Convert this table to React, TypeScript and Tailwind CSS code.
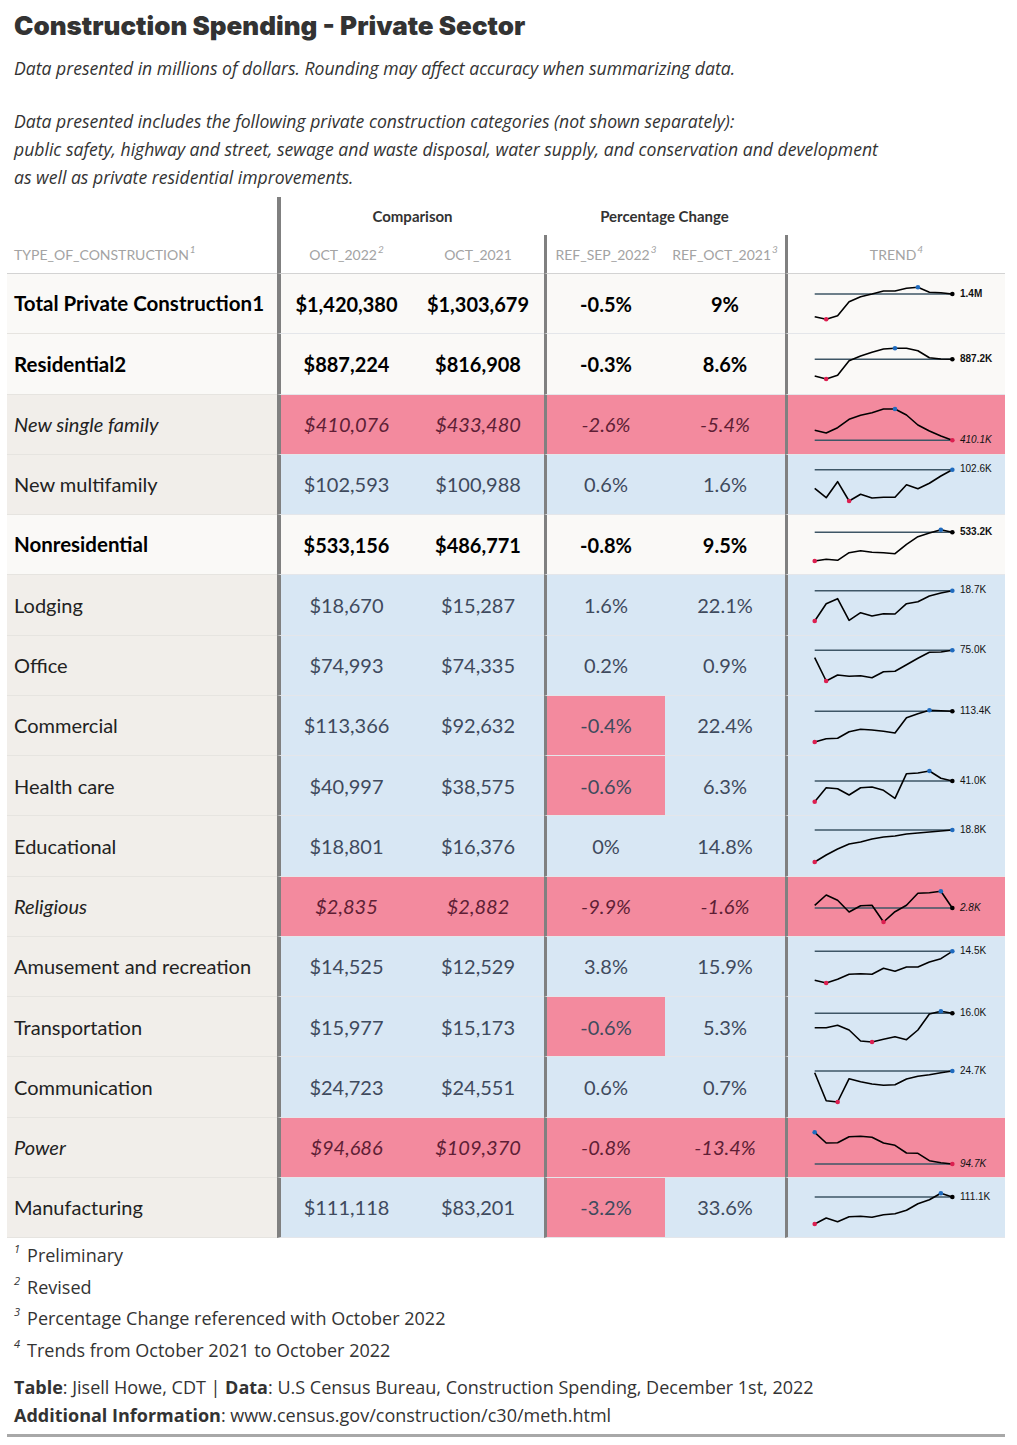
import React from "react";

type Row = {
  name: string;
  kind: "bold" | "red" | "plain";
  v1: string;
  v2: string;
  p1: string;
  p2: string;
  p1Red?: boolean;
  label: string;
  pts: number[];
  lo: number;
  hi: number;
};

const rows: Row[] = [
  { name: "Total Private Construction1", kind: "bold", v1: "$1,420,380", v2: "$1,303,679", p1: "-0.5%", p2: "9%", label: "1.4M", pts: [42.7, 45.3, 41.7, 27.7, 22.7, 20, 17, 17, 14.3, 13.3, 18.3, 18.7, 20], lo: 1, hi: 9 },
  { name: "Residential2", kind: "bold", v1: "$887,224", v2: "$816,908", p1: "-0.3%", p2: "8.6%", label: "887.2K", pts: [42, 45, 41.3, 26.7, 22, 18.3, 15, 14.3, 14.3, 16.7, 23.7, 25, 25.3], lo: 1, hi: 7 },
  { name: "New single family", kind: "red", v1: "$410,076", v2: "$433,480", p1: "-2.6%", p2: "-5.4%", label: "410.1K", pts: [35.3, 38, 32.7, 24.3, 20.3, 17.7, 14, 14, 20, 30, 36, 41, 45.3], lo: 12, hi: 7 },
  { name: "New multifamily", kind: "plain", v1: "$102,593", v2: "$100,988", p1: "0.6%", p2: "1.6%", label: "102.6K", pts: [33.3, 42.7, 26.7, 46, 39.3, 43, 42.3, 42.3, 29.7, 33.7, 28.3, 21, 14.7], lo: 3, hi: 12 },
  { name: "Nonresidential", kind: "bold", v1: "$533,156", v2: "$486,771", p1: "-0.8%", p2: "9.5%", label: "533.2K", pts: [46, 44.3, 45.3, 37.7, 35.7, 37.3, 37.7, 38.7, 29.3, 21.7, 18, 14.7, 17.3], lo: 0, hi: 11 },
  { name: "Lodging", kind: "plain", v1: "$18,670", v2: "$15,287", p1: "1.6%", p2: "22.1%", label: "18.7K", pts: [46, 28.7, 23.7, 45.3, 37.7, 41, 38.7, 39, 28.7, 26.7, 21, 18, 15.7], lo: 0, hi: 12 },
  { name: "Office", kind: "plain", v1: "$74,993", v2: "$74,335", p1: "0.2%", p2: "0.9%", label: "75.0K", pts: [21.7, 45, 39, 40.3, 39.7, 41.7, 35.7, 35.3, 28.7, 22.3, 16.3, 16, 14.3], lo: 1, hi: 12 },
  { name: "Commercial", kind: "plain", v1: "$113,366", v2: "$92,632", p1: "-0.4%", p2: "22.4%", p1Red: true, label: "113.4K", pts: [46, 42.7, 42.3, 35.7, 33.3, 34, 35.3, 37, 21.7, 17.7, 14.3, 14.7, 15.3], lo: 0, hi: 10 },
  { name: "Health care", kind: "plain", v1: "$40,997", v2: "$38,575", p1: "-0.6%", p2: "6.3%", p1Red: true, label: "41.0K", pts: [45.7, 31.7, 32.7, 39, 31.7, 31, 34.3, 42.3, 17.7, 17, 15, 22.3, 25], lo: 0, hi: 10 },
  { name: "Educational", kind: "plain", v1: "$18,801", v2: "$16,376", p1: "0%", p2: "14.8%", label: "18.8K", pts: [46, 39, 33, 28, 26, 23, 21, 20, 18, 17, 16, 15, 14], lo: 0, hi: 12 },
  { name: "Religious", kind: "red", v1: "$2,835", v2: "$2,882", p1: "-9.9%", p2: "-1.6%", label: "2.8K", pts: [28.3, 18, 23.3, 35, 28.7, 28.3, 45, 34.7, 28.3, 16.3, 15.7, 14.3, 31], lo: 6, hi: 11 },
  { name: "Amusement and recreation", kind: "plain", v1: "$14,525", v2: "$12,529", p1: "3.8%", p2: "15.9%", label: "14.5K", pts: [43.3, 46, 42.3, 37.3, 36.7, 37.3, 31.3, 34.3, 30, 30, 25, 21.7, 14.3], lo: 1, hi: 12 },
  { name: "Transportation", kind: "plain", v1: "$15,977", v2: "$15,173", p1: "-0.6%", p2: "5.3%", p1Red: true, label: "16.0K", pts: [30.7, 30.7, 28.3, 33, 44, 45, 42.3, 39.7, 42.7, 33, 17, 14.3, 16.3], lo: 5, hi: 11 },
  { name: "Communication", kind: "plain", v1: "$24,723", v2: "$24,551", p1: "0.6%", p2: "0.7%", label: "24.7K", pts: [15.7, 43.7, 45, 21.7, 24.7, 27, 28.3, 27.7, 22, 19.3, 17.7, 15.7, 14], lo: 2, hi: 12 },
  { name: "Power", kind: "red", v1: "$94,686", v2: "$109,370", p1: "-0.8%", p2: "-13.4%", label: "94.7K", pts: [14.3, 25, 24.7, 18.7, 18.3, 19.3, 25, 27.3, 35, 35.3, 42.7, 44.7, 46], lo: 12, hi: 0 },
  { name: "Manufacturing", kind: "plain", v1: "$111,118", v2: "$83,201", p1: "-3.2%", p2: "33.6%", p1Red: true, label: "111.1K", pts: [46, 40, 43.7, 38.7, 38.3, 39.3, 36.7, 35.7, 32.3, 25.7, 21.7, 15.3, 19], lo: 0, hi: 11 },
];

function Sparkline({ row }: { row: Row }) {
  const x0 = 26.7;
  const step = 11.47;
  const pts = row.pts.map((y, i) => [x0 + i * step, y] as const);
  const last = pts[pts.length - 1];
  const d = pts.map(([x, y], i) => `${i === 0 ? "M" : "L"}${x.toFixed(1)},${y}`).join(" ");
  const lastIdx = pts.length - 1;
  const showLast = lastIdx !== row.lo && lastIdx !== row.hi;
  return (
    <svg width="217" height="60" viewBox="0 0 217 60" className="block">
      <line x1={x0} x2={last[0]} y1={last[1]} y2={last[1]} stroke="#3e5666" strokeWidth="1.4" />
      <path d={d} fill="none" stroke="#000" strokeWidth="1.6" strokeLinejoin="round" />
      <circle cx={pts[row.lo][0]} cy={pts[row.lo][1]} r="2.3" fill="#dc1f50" />
      <circle cx={pts[row.hi][0]} cy={pts[row.hi][1]} r="2.3" fill="#1f6bbf" />
      {showLast && <circle cx={last[0]} cy={last[1]} r="2.3" fill="#000" />}
      <text
        x="172"
        y={last[1]}
        dominantBaseline="middle"
        fontFamily="'Liberation Sans', Arial, sans-serif"
        fontSize="10"
        fontWeight={row.kind === "bold" ? 700 : 400}
        fontStyle={row.kind === "red" ? "italic" : "normal"}
        fill="#111"
      >
        {row.label}
      </text>
    </svg>
  );
}

function Sup({ n }: { n: number }) {
  return <sup className="ml-[1px] text-[10px] italic">{n}</sup>;
}

export default function App() {
  return (
    <div className="w-[1017px] bg-white pb-2" style={{ fontFamily: "Lato, 'Noto Sans', sans-serif" }}>
      <div className="pl-[14px] pt-[10px]">
        <h1 className="font-['Inter',sans-serif] text-[26px] font-black leading-[32px] text-[#333333]">
          Construction Spending - Private Sector
        </h1>
        <p className="mt-[12px] font-['Open_Sans',sans-serif] text-[17.6px] italic leading-[28px] text-[#333333]">
          Data presented in millions of dollars. Rounding may affect accuracy when summarizing data.
        </p>
        <p className="mt-[25px] font-['Open_Sans',sans-serif] text-[17.6px] italic leading-[28px] text-[#333333]">
          Data presented includes the following private construction categories (not shown separately):
          <br />
          public safety, highway and street, sewage and waste disposal, water supply, and conservation and development
          <br />
          as well as private residential improvements.
        </p>
      </div>

      <div className="ml-[7px] mt-[6px] w-[998px]">
        {/* spanner row */}
        <div className="flex h-[38px]">
          <div className="w-[270px]" />
          <div className="flex w-[267px] items-center justify-center border-l-[4px] border-[#808080] text-[15px] font-bold text-[#333333]">
            Comparison
          </div>
          <div className="flex w-[241px] items-center justify-center text-[15px] font-bold text-[#333333]">
            Percentage Change
          </div>
          <div className="w-[220px]" />
        </div>
        {/* column labels */}
        <div className="flex h-[39px] text-[14px] text-[#a3a3a3]">
          <div className="flex w-[270px] items-center border-b border-[#d3d3d3] pl-[7px]">
            TYPE_OF_CONSTRUCTION<Sup n={1} />
          </div>
          <div className="flex w-[135px] items-center justify-center border-b border-l-[4px] border-b-[#d3d3d3] border-l-[#808080]">
            OCT_2022<Sup n={2} />
          </div>
          <div className="flex w-[132px] items-center justify-center border-b border-[#d3d3d3]">OCT_2021</div>
          <div className="flex w-[121px] items-center justify-center border-b border-l-[3px] border-b-[#d3d3d3] border-l-[#808080]">
            REF_SEP_2022<Sup n={3} />
          </div>
          <div className="flex w-[120px] items-center justify-center border-b border-[#d3d3d3]">
            REF_OCT_2021<Sup n={3} />
          </div>
          <div className="flex w-[220px] items-center justify-center border-b border-l-[3px] border-b-[#d3d3d3] border-l-[#808080]">
            TREND<Sup n={4} />
          </div>
        </div>

        {rows.map((r) => {
          const bold = r.kind === "bold";
          const red = r.kind === "red";
          const firstBg = bold ? "bg-[#faf9f7]" : "bg-[#f1eeea]";
          const dataBg = bold ? "bg-[#faf9f7]" : red ? "bg-[#f38a9e]" : "bg-[#d8e7f4]";
          const dataText = bold
            ? "font-bold text-black"
            : red
            ? "italic text-[#5e1e35]"
            : "text-[#3f4a5d]";
          const firstText = bold ? "font-bold text-black text-[20.5px]" : red ? "italic text-[#222]" : "text-[#222]";
          const p1Bg = r.p1Red ? "bg-[#f38a9e]" : dataBg;
          return (
            <div key={r.name} className="flex h-[60.25px] text-[20px]">
              <div className={`flex w-[270px] items-center border-b border-[#e6e4e0] pl-[7px] ${firstBg} ${firstText}`}>
                {r.name}
              </div>
              <div className={`flex w-[135px] items-center justify-center border-b border-l-[4px] border-b-[#e4e6ea] border-l-[#808080] ${dataBg} ${dataText}`}>
                {r.v1}
              </div>
              <div className={`flex w-[132px] items-center justify-center border-b border-[#e4e6ea] ${dataBg} ${dataText}`}>
                {r.v2}
              </div>
              <div className={`flex w-[121px] items-center justify-center border-b border-l-[3px] border-b-[#e4e6ea] border-l-[#808080] ${p1Bg} ${dataText}`}>
                {r.p1}
              </div>
              <div className={`flex w-[120px] items-center justify-center border-b border-[#e4e6ea] ${dataBg} ${dataText}`}>
                {r.p2}
              </div>
              <div className={`w-[220px] border-b border-l-[3px] border-b-[#e4e6ea] border-l-[#808080] ${dataBg}`}>
                <Sparkline row={r} />
              </div>
            </div>
          );
        })}
      </div>

      <div className="mt-[2px] pl-[14px] font-['Open_Sans',sans-serif] text-[18px] text-[#333333]">
        {[
          "Preliminary",
          "Revised",
          "Percentage Change referenced with October 2022",
          "Trends from October 2021 to October 2022",
        ].map((t, i) => (
          <div key={t} className="flex h-[31.5px] items-end">
            <span className="mb-[14px] mr-[7px] text-[11px] italic">{i + 1}</span>
            <span className="leading-[31.5px]">{t}</span>
          </div>
        ))}
        <div className="mt-[7px] leading-[28px]">
          <span className="font-bold">Table</span>: Jisell Howe, CDT | <span className="font-bold">Data</span>: U.S Census
          Bureau, Construction Spending, December 1st, 2022
        </div>
        <div className="leading-[28px]">
          <span className="font-bold">Additional Information</span>: www.census.gov/construction/c30/meth.html
        </div>
      </div>
      <div className="ml-[7px] mt-[5px] h-[3px] w-[998px] bg-[#a8a8a8]" />
    </div>
  );
}
